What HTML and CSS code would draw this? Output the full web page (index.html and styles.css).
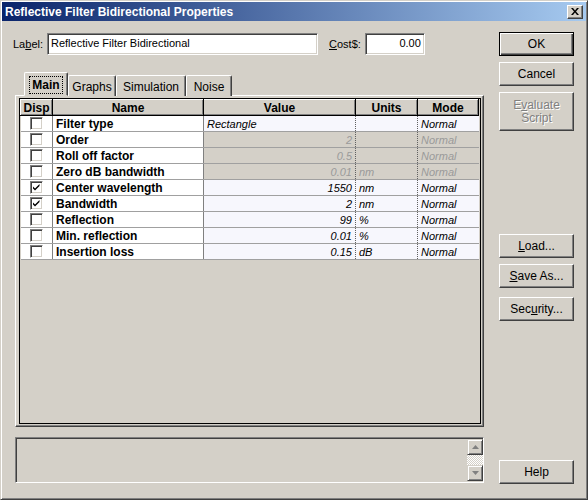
FILE: index.html
```html
<!DOCTYPE html>
<html lang="en">
<head>
  <meta charset="UTF-8">
  <title>Reflective Filter Bidirectional Properties</title>
  <link rel="stylesheet" href="styles.css">
</head>
<body>
  <div class="window">
    <div class="titlebar">
      <span class="title">Reflective Filter Bidirectional Properties</span>
      <span class="close">
        <svg width="8" height="7" viewBox="0 0 8 7"><path d="M0 0h2l2 2.5L6 0h2L5 3.5 8 7H6L4 4.5 2 7H0l3-3.5z" fill="#000"/></svg>
      </span>
    </div>

    <div class="body">
      <div class="main">
        <div class="label-row">
          <span class="caption">La<u>b</u>el:</span>
          <div class="field label-field">Reflective Filter Bidirectional</div>
          <span class="caption cost"><u>C</u>ost$:</span>
          <div class="field cost-field">0.00</div>
        </div>

        <div class="tabs">
          <div class="tab active"><span>Main</span></div>
          <div class="tab graphs">Graphs</div>
          <div class="tab simulation">Simulation</div>
          <div class="tab noise">Noise</div>
        </div>

        <div class="panel">
          <div class="grid">
            <table>
              <thead>
                <tr>
                  <th class="c-disp">Disp</th>
                  <th class="c-name">Name</th>
                  <th class="c-value">Value</th>
                  <th class="c-units">Units</th>
                  <th class="c-mode">Mode</th>
                </tr>
              </thead>
              <tbody>
                <tr>
                  <td class="c-disp"><span class="check"></span></td>
                  <td class="c-name">Filter type</td>
                  <td class="c-value left">Rectangle</td>
                  <td class="c-units"></td>
                  <td class="c-mode">Normal</td>
                </tr>
                <tr class="off">
                  <td class="c-disp"><span class="check"></span></td>
                  <td class="c-name">Order</td>
                  <td class="c-value">2</td>
                  <td class="c-units"></td>
                  <td class="c-mode">Normal</td>
                </tr>
                <tr class="off">
                  <td class="c-disp"><span class="check"></span></td>
                  <td class="c-name">Roll off factor</td>
                  <td class="c-value">0.5</td>
                  <td class="c-units"></td>
                  <td class="c-mode">Normal</td>
                </tr>
                <tr class="off">
                  <td class="c-disp"><span class="check"></span></td>
                  <td class="c-name">Zero dB bandwidth</td>
                  <td class="c-value">0.01</td>
                  <td class="c-units">nm</td>
                  <td class="c-mode">Normal</td>
                </tr>
                <tr>
                  <td class="c-disp"><span class="check on"><svg width="9" height="9" viewBox="0 0 9 9"><path d="M1 3.5l2 2 4.5-4.5v2L3 7.5l-2-2z" fill="#000"/></svg></span></td>
                  <td class="c-name">Center wavelength</td>
                  <td class="c-value">1550</td>
                  <td class="c-units">nm</td>
                  <td class="c-mode">Normal</td>
                </tr>
                <tr>
                  <td class="c-disp"><span class="check on"><svg width="9" height="9" viewBox="0 0 9 9"><path d="M1 3.5l2 2 4.5-4.5v2L3 7.5l-2-2z" fill="#000"/></svg></span></td>
                  <td class="c-name">Bandwidth</td>
                  <td class="c-value">2</td>
                  <td class="c-units">nm</td>
                  <td class="c-mode">Normal</td>
                </tr>
                <tr>
                  <td class="c-disp"><span class="check"></span></td>
                  <td class="c-name">Reflection</td>
                  <td class="c-value">99</td>
                  <td class="c-units">%</td>
                  <td class="c-mode">Normal</td>
                </tr>
                <tr>
                  <td class="c-disp"><span class="check"></span></td>
                  <td class="c-name">Min. reflection</td>
                  <td class="c-value">0.01</td>
                  <td class="c-units">%</td>
                  <td class="c-mode">Normal</td>
                </tr>
                <tr>
                  <td class="c-disp"><span class="check"></span></td>
                  <td class="c-name">Insertion loss</td>
                  <td class="c-value">0.15</td>
                  <td class="c-units">dB</td>
                  <td class="c-mode">Normal</td>
                </tr>
              </tbody>
            </table>
          </div>
        </div>

        <div class="msgbox">
          <div class="scroll">
            <span class="arrow"><svg width="7" height="4" viewBox="0 0 7 4"><path d="M3.5 0L7 4H0z" fill="#808080"/></svg></span>
            <span class="track"></span>
            <span class="arrow"><svg width="7" height="4" viewBox="0 0 7 4"><path d="M0 0h7L3.5 4z" fill="#808080"/></svg></span>
          </div>
        </div>
      </div>

      <div class="buttons">
        <button class="btn default">OK</button>
        <button class="btn cancel">Cancel</button>
        <button class="btn disabled eval">E<u>v</u>aluate<br>Script</button>
        <button class="btn load"><u>L</u>oad...</button>
        <button class="btn save"><u>S</u>ave As...</button>
        <button class="btn security">Sec<u>u</u>rity...</button>
        <button class="btn help">Help</button>
      </div>
    </div>
  </div>
</body>
</html>
```

FILE: styles.css
```css
*{
  box-sizing: border-box;
}
body{
  margin: 0;
  background: #d4d0c8;
  font-family: "Liberation Sans", Arial, sans-serif;
  font-size: 11px;
  color: #000;
}
.window{
  width: 588px;
  height: 500px;
  padding: 1px;
  border: 1px solid;
  border-color: #d4d0c8 #404040 #404040 #d4d0c8;
  box-shadow: inset 1px 1px #fff, inset -1px -1px #808080;
  background: #d4d0c8;
}

/* title bar */
.titlebar{
  height: 19px;
  display: flex;
  align-items: center;
  justify-content: space-between;
  padding: 0 3px 0 3px;
  background: linear-gradient(to right, #0a246a, #a6caf0);
  color: #fff;
  font-weight: bold;
  font-size: 12px;
}
.close{
  width: 16px;
  height: 14px;
  display: flex;
  align-items: center;
  justify-content: center;
  background: #d4d0c8;
  border: 1px solid;
  border-color: #fff #404040 #404040 #fff;
  box-shadow: inset -1px -1px #808080;
}

.body{
  display: flex;
  padding-left: 13px;
}
.main{
  width: 469px;
}

/* label row */
.label-row{
  display: flex;
  align-items: center;
  height: 22px;
  margin-top: 12px;
  margin-left: -2px;
}
.caption{
  margin-right: 4px;
}
.caption.cost{
  margin-left: 11px;
}
.field{
  height: 22px;
  background: #fff;
  border: 1px solid;
  border-color: #808080 #fff #fff #808080;
  box-shadow: inset 1px 1px #404040, inset -1px -1px #d4d0c8;
  padding: 3px 3px 0;
  white-space: nowrap;
  overflow: hidden;
}
.label-field{
  width: 271px;
}
.cost-field{
  width: 60px;
  text-align: right;
}

/* tabs */
.tabs{
  display: flex;
  align-items: flex-end;
  height: 24px;
  margin-top: 17px;
  padding-left: 9px;
  margin-bottom: -1px;
  position: relative;
  z-index: 1;
}
.tab{
  height: 21px;
  padding-top: 4px;
  text-align: center;
  font-size: 12px;
  border: 1px solid;
  border-bottom: none;
  border-color: #fff #404040 #fff #fff;
  box-shadow: inset -1px 0 #808080;
  border-radius: 2px 2px 0 0;
  background: #d4d0c8;
}
.tab.graphs{
  width: 48px;
}
.tab.simulation{
  width: 70px;
}
.tab.noise{
  width: 46px;
}
.tab.active{
  width: 44px;
  height: 24px;
  padding-top: 3px;
  font-weight: bold;
  border-bottom: 1px solid #d4d0c8;
}
.tab.active span{
  display: inline-block;
  padding: 1px 2px;
  border: 1px dotted #000;
}

/* panel with grid */
.panel{
  height: 332px;
  border: 1px solid;
  border-color: #fff #404040 #404040 #fff;
  box-shadow: inset -1px -1px #808080;
  padding: 2px 3px 3px 3px;
}
.grid{
  width: 462px;
  height: 326px;
  border: 1px solid #000;
  background: #d4d0c8;
}
table{
  border-collapse: collapse;
  table-layout: fixed;
  width: 459px;
}
th{
  height: 16px;
  padding: 0;
  background: #d4d0c8;
  font-weight: bold;
  font-size: 12px;
  border-top: 1px solid #fff;
  border-left: 1px solid #fff;
  border-right: 1px solid #000;
  border-bottom: 1px solid #000;
  box-shadow: inset -1px -1px #808080;
}
td{
  height: 16px;
  padding: 0 3px;
  border-bottom: 1px solid #a0a0a0;
  background: #f7f7fd;
  font-style: italic;
  white-space: nowrap;
}
.c-disp{
  width: 32px;
}
.c-name{
  width: 151px;
}
.c-value{
  width: 152px;
}
.c-units{
  width: 62px;
}
td.c-disp{
  background: #fff;
  text-align: center;
  border-right: 1px solid #808080;
  padding: 0;
}
td.c-name{
  background: #fff;
  font-weight: bold;
  font-style: normal;
  font-size: 12px;
  border-right: 1px solid #808080;
}
td.c-value{
  text-align: right;
  border-right: 1px dotted #606060;
}
td.c-value.left{
  text-align: left;
}
td.c-units{
  border-right: 1px dotted #606060;
}
tr.off td.c-value,
tr.off td.c-units,
tr.off td.c-mode{
  background: #d4d0c8;
  color: #9a9a9a;
}
.check{
  display: inline-flex;
  align-items: center;
  justify-content: center;
  width: 13px;
  height: 13px;
  vertical-align: middle;
  background: #fff;
  border: 1px solid;
  border-color: #808080 #fff #fff #808080;
  box-shadow: inset 1px 1px #404040, inset -1px -1px #d4d0c8;
}

/* message box */
.msgbox{
  height: 46px;
  margin-top: 10px;
  border: 1px solid;
  border-color: #808080 #fff #fff #808080;
  box-shadow: inset 1px 1px #404040;
  display: flex;
  justify-content: flex-end;
  padding: 1px 0 1px 0;
}
.scroll{
  width: 16px;
  display: flex;
  flex-direction: column;
}
.arrow{
  height: 16px;
  display: flex;
  align-items: center;
  justify-content: center;
  background: #d4d0c8;
  border: 1px solid;
  border-color: #d4d0c8 #404040 #404040 #d4d0c8;
  box-shadow: inset 1px 1px #fff, inset -1px -1px #808080;
}
.track{
  flex: 1;
  background: repeating-conic-gradient(#fff 0 25%, #d4d0c8 0 50%) 0 0 / 2px 2px;
}

/* buttons */
.buttons{
  display: flex;
  flex-direction: column;
  margin-left: 15px;
  padding-top: 11px;
  width: 75px;
}
.btn{
  font-family: inherit;
  font-size: 12px;
  width: 75px;
  height: 24px;
  padding: 0;
  background: #d4d0c8;
  color: #000;
  border: 1px solid;
  border-color: #fff #404040 #404040 #fff;
  box-shadow: inset -1px -1px #808080;
}
.btn.default{
  border: 1px solid #000;
  box-shadow: inset 1px 1px #fff, inset -1px -1px #404040, inset -2px -2px #808080;
}
.btn.cancel{
  margin-top: 6px;
}
.btn.eval{
  margin-top: 6px;
  height: 39px;
  line-height: 13px;
}
.btn.disabled{
  color: #808080;
  text-shadow: 1px 1px #fff;
}
.btn.load{
  margin-top: 103px;
}
.btn.save{
  margin-top: 6px;
}
.btn.security{
  margin-top: 9px;
}
.btn.help{
  margin-top: 139px;
}
```
